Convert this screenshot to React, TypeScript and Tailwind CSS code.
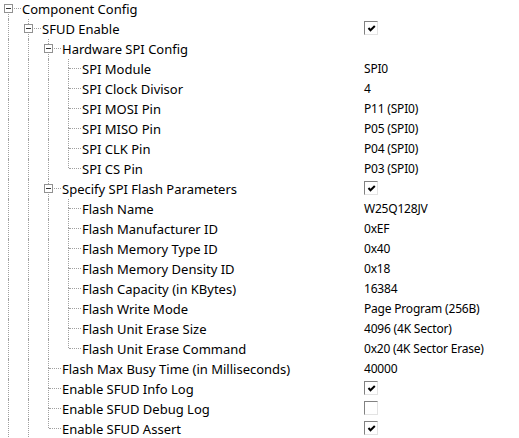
import React from "react";

type Row = {
  level: number;
  label: string;
  value?: string;
  check?: boolean;
  expander?: boolean;
  last?: boolean; // last among its siblings
};

const rows: Row[] = [
  { level: 0, label: "Component Config", expander: true },
  { level: 1, label: "SFUD Enable", expander: true, check: true },
  { level: 2, label: "Hardware SPI Config", expander: true },
  { level: 3, label: "SPI Module", value: "SPI0" },
  { level: 3, label: "SPI Clock Divisor", value: "4" },
  { level: 3, label: "SPI MOSI Pin", value: "P11 (SPI0)" },
  { level: 3, label: "SPI MISO Pin", value: "P05 (SPI0)" },
  { level: 3, label: "SPI CLK Pin", value: "P04 (SPI0)" },
  { level: 3, label: "SPI CS Pin", value: "P03 (SPI0)", last: true },
  { level: 2, label: "Specify SPI Flash Parameters", expander: true, check: true },
  { level: 3, label: "Flash Name", value: "W25Q128JV" },
  { level: 3, label: "Flash Manufacturer ID", value: "0xEF" },
  { level: 3, label: "Flash Memory Type ID", value: "0x40" },
  { level: 3, label: "Flash Memory Density ID", value: "0x18" },
  { level: 3, label: "Flash Capacity (in KBytes)", value: "16384" },
  { level: 3, label: "Flash Write Mode", value: "Page Program (256B)" },
  { level: 3, label: "Flash Unit Erase Size", value: "4096 (4K Sector)" },
  { level: 3, label: "Flash Unit Erase Command", value: "0x20 (4K Sector Erase)", last: true },
  { level: 2, label: "Flash Max Busy Time (in Milliseconds)", value: "40000" },
  { level: 2, label: "Enable SFUD Info Log", check: true },
  { level: 2, label: "Enable SFUD Debug Log", check: false },
  { level: 2, label: "Enable SFUD Assert", check: true, last: true },
];

// does the ancestor of row i at `level` have a later sibling?
function ancestorContinues(i: number, level: number): boolean {
  for (let j = i; j >= 0; j--) {
    if (rows[j].level === level) return !rows[j].last;
  }
  return true;
}

const dot = "border-dotted border-[#a0a0a0]";

function Guide({ full }: { full: boolean }) {
  return (
    <div className="relative w-[20px] h-[20px] shrink-0">
      {full && <div className={`absolute left-[8px] top-0 bottom-0 border-l ${dot}`} />}
    </div>
  );
}

function Connector({ row, first }: { row: Row; first: boolean }) {
  return (
    <div className="relative w-[20px] h-[20px] shrink-0">
      {!first && <div className={`absolute left-[8px] top-0 h-[9px] border-l ${dot}`} />}
      {!row.last && <div className={`absolute left-[8px] top-[9px] bottom-0 border-l ${dot}`} />}
      <div className={`absolute left-[9px] right-[-1px] top-[9px] border-t ${dot}`} />
      {row.expander && (
        <div className="absolute left-[4px] top-[5px] w-[9px] h-[9px] border border-[#919191] bg-white flex items-center justify-center">
          <div className="w-[5px] h-px bg-[#333]" />
        </div>
      )}
    </div>
  );
}

function CheckBox({ checked }: { checked: boolean }) {
  return (
    <div className="mt-[2px] w-[14px] h-[14px] border-t border-l border-[#828282] border-r border-b border-r-[#e3e3e3] border-b-[#e3e3e3] bg-white relative">
      {checked && (
        <svg className="absolute left-[2px] top-[2px]" width="9" height="9" viewBox="0 0 9 9">
          <path d="M1.5 4 L3.5 6.3 L7.8 2" stroke="#000" strokeWidth="2" fill="none" />
        </svg>
      )}
    </div>
  );
}

export default function App() {
  return (
    <div
      className="w-[519px] h-[438px] overflow-hidden bg-white text-black"
      style={{ fontFamily: '"Noto Sans", "Open Sans", sans-serif' }}
    >
      <div className="-mt-px flex flex-col">
        {rows.map((row, i) => (
          <div key={i} className="flex h-[20px] leading-[20px]">
            <div className="w-[363px] shrink-0 flex">
              {Array.from({ length: row.level }).map((_, k) => (
                <Guide key={k} full={ancestorContinues(i - 1, k)} />
              ))}
              <Connector row={row} first={i === 0} />
              <span className="pl-[2px] whitespace-nowrap text-[13px]">{row.label}</span>
            </div>
            <div className="flex-1 pl-[1px] whitespace-nowrap text-[12px] tracking-[-0.2px]">
              {row.check !== undefined ? <CheckBox checked={row.check} /> : row.value}
            </div>
          </div>
        ))}
      </div>
    </div>
  );
}
